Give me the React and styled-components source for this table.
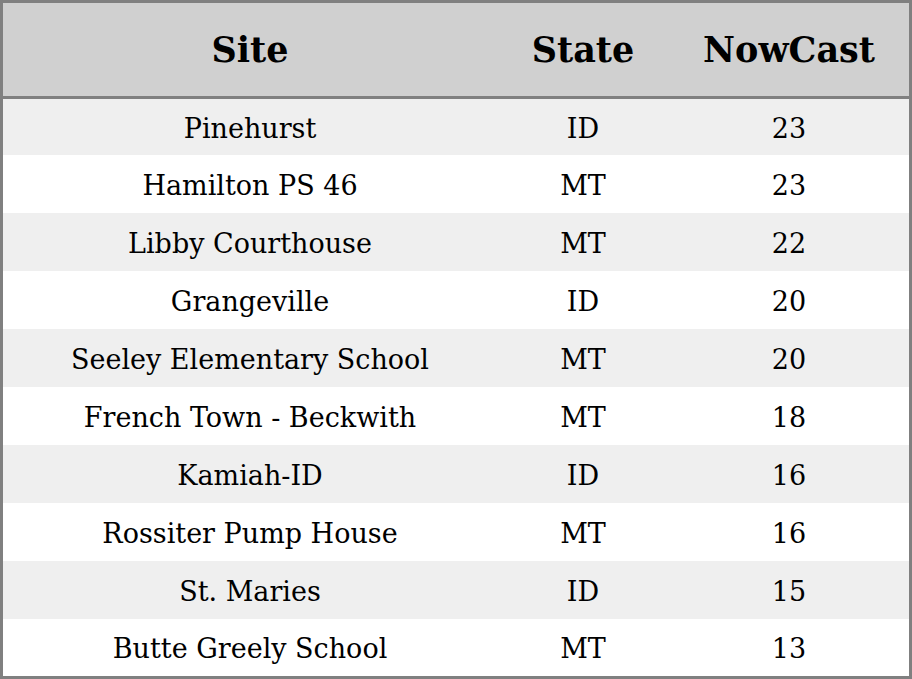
import React from 'react';
import styled, { createGlobalStyle } from 'styled-components';

const GlobalStyle = createGlobalStyle`
  html, body {
    margin: 0;
    padding: 0;
    background: #ffffff;
  }
  body {
    font-family: "DejaVu Serif", serif;
  }
`;

const Table = styled.table`
  width: 100vw;
  border-collapse: collapse;
  border: 3px solid #808080;
  box-sizing: border-box;
  table-layout: fixed;
  font-family: "DejaVu Serif", serif;
  color: #000;
`;

const HeadCell = styled.th`
  width: ${props => props.w}px;
  height: 93px;
  background: #d0d0d0;
  border-bottom: 3px solid #808080;
  font-size: 35px;
  font-weight: bold;
  text-align: center;
  padding: 0;
`;

const Row = styled.tr`
  height: 58px;
  background: ${props => (props.odd ? '#efefef' : '#ffffff')};

  &:first-child {
    height: 57.5px;
  }
  &:last-child {
    height: 58.5px;
  }
`;

const Cell = styled.td`
  font-size: 27px;
  text-align: center;
  padding: 2px 0 0;
`;

const rows = [
  ['Pinehurst', 'ID', 23],
  ['Hamilton PS 46', 'MT', 23],
  ['Libby Courthouse', 'MT', 22],
  ['Grangeville', 'ID', 20],
  ['Seeley Elementary School', 'MT', 20],
  ['French Town - Beckwith', 'MT', 18],
  ['Kamiah-ID', 'ID', 16],
  ['Rossiter Pump House', 'MT', 16],
  ['St. Maries', 'ID', 15],
  ['Butte Greely School', 'MT', 13],
];

export default function App() {
  return (
    <>
      <GlobalStyle />
      <Table>
        <thead>
          <tr>
            <HeadCell w={494}>Site</HeadCell>
            <HeadCell w={172}>State</HeadCell>
            <HeadCell w={240}>NowCast</HeadCell>
          </tr>
        </thead>
        <tbody>
          {rows.map((r, i) => (
            <Row key={r[0]} odd={i % 2 === 0}>
              <Cell>{r[0]}</Cell>
              <Cell>{r[1]}</Cell>
              <Cell>{r[2]}</Cell>
            </Row>
          ))}
        </tbody>
      </Table>
    </>
  );
}
